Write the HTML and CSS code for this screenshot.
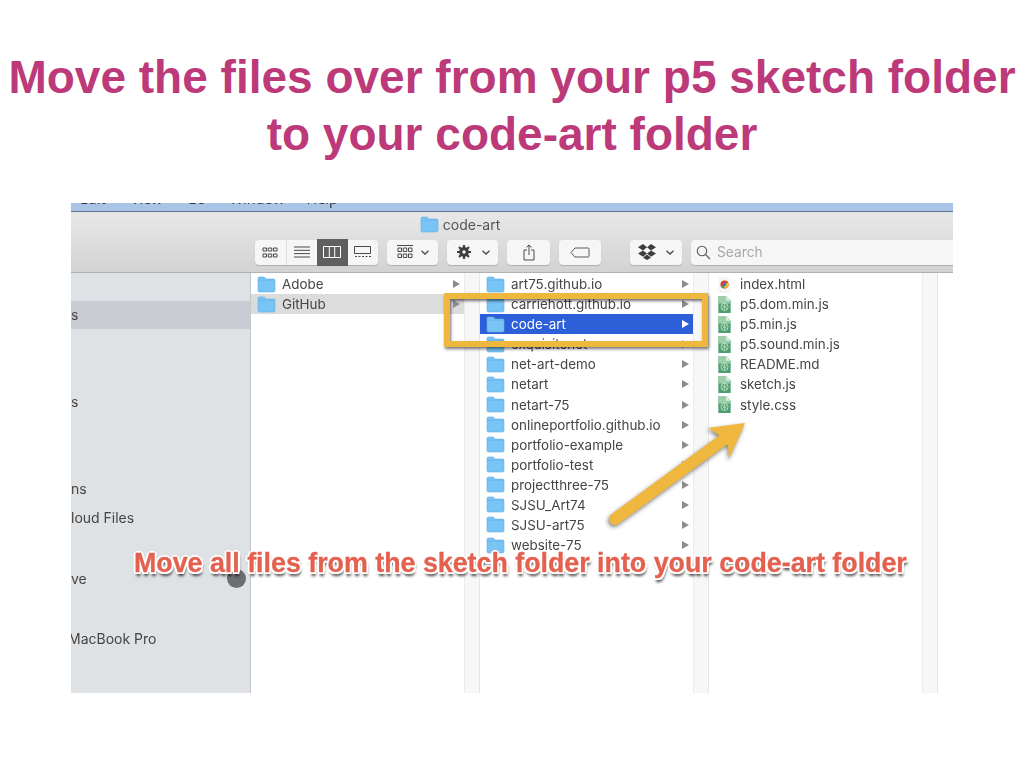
FILE: index.html
```html
<!DOCTYPE html>
<html lang="en">
<head>
<meta charset="utf-8">
<title>Move the files</title>
<link rel="stylesheet" href="styles.css">
</head>
<body>
<svg class="defs" width="0" height="0" aria-hidden="true">
  <defs>
    <symbol id="folder" viewBox="0 0 19 17">
      <path d="M1 2.400C1 1.600 1.600 1 2.400 1h4.400c.6 0 .9.2 1.300.7L9 3h7.600c.8 0 1.400.6 1.400 1.400v10.200c0 .8-.6 1.400-1.400 1.400H2.400C1.600 16 1 15.400 1 14.600z" fill="#7ac4f5" stroke="#62afe4" stroke-width=".6"/>
      <path d="M1 4.200h17" stroke="#5fade6" stroke-width=".6"/>
    </symbol>
    <symbol id="doc" viewBox="0 0 13 18">
      <path d="M0 0h8l5 5v13H0z" fill="#4f9e70"/>
      <path d="M0 0h8l5 5v3H0z" fill="#9ccfa9"/>
      <path d="M8 0l5 5H8z" fill="#d6ecd9"/>
      <circle cx="6.500" cy="11.500" r="3.800" fill="none" stroke="#bfe2ca" stroke-width=".9"/>
      <path d="M3.500 9.500l6 4M9.500 9.500l-6 4M6.500 7.500v8" stroke="#bfe2ca" stroke-width=".7"/>
    </symbol>
    <symbol id="chrome" viewBox="0 0 13 18">
      <path d="M0 0h8.500L13 4.500V18H0z" fill="#f6f6f6"/>
      <circle cx="6.500" cy="9" r="4.300" fill="#d9452f"/>
      <path d="M6.500 9L2.800 11.200A4.300 4.300 0 0 0 6.500 13.300z" fill="#4ba05a"/>
      <path d="M6.500 9v4.300a4.300 4.300 0 0 0 3.800-6.400z" fill="#f2c230"/>
      <circle cx="6.500" cy="9" r="1.800" fill="#3d77cf"/>
    </symbol>
  </defs>
</svg>

<header class="title">
  <h1>Move the files over from your p5 sketch folder<br>to your code-art folder</h1>
</header>

<main class="shot">
  <div class="menubar">
    <span class="menu-edit">Edit</span><span class="menu-view">View</span><span class="menu-go">Go</span><span class="menu-window">Window</span><span class="menu-help">Help</span>
  </div>

  <div class="toolbar">
    <div class="window-title">
      <svg class="ico-folder"><use href="#folder"/></svg><span>code-art</span>
    </div>
    <div class="tools">
      <div class="btn seg">
        <span class="cell"><svg width="16" height="11" viewBox="0 0 16 11"><path d="M1 1h3.500v3H1zM6.250 1h3.500v3h-3.500zM11.500 1H15v3h-3.500zM1 7h3.500v3H1zM6.250 7h3.500v3h-3.500zM11.500 7H15v3h-3.500z" fill="none" stroke="#4a4a4a"/></svg></span>
        <span class="cell plain"><svg width="16" height="12" viewBox="0 0 16 12"><path d="M0 1h16M0 4.300h16M0 7.600h16M0 11h16" stroke="#4a4a4a"/></svg></span>
        <span class="cell on"><svg width="18" height="12" viewBox="0 0 18 12"><path d="M.5.5h17v11H.5zM6.300.5v11M11.700.5v11" fill="none" stroke="#fff"/></svg></span>
        <span class="cell"><svg width="17" height="12" viewBox="0 0 17 12"><path d="M.5.5h16v7H.5z" fill="none" stroke="#4a4a4a"/><path d="M1 10.500h2M4.500 10.500h2M8 10.500h2M11.500 10.500h2M15 10.500h2" stroke="#4a4a4a"/></svg></span>
      </div>
      <div class="btn arrange">
        <svg width="16" height="14" viewBox="0 0 16 14"><path d="M0 .5h16M1 3h3.500v3.500H1zM6.250 3h3.500v3.500h-3.500zM11.500 3H15v3.500h-3.500zM1 9h3.500v3.500H1zM6.250 9h3.500v3.500h-3.500zM11.500 9H15v3.500h-3.500z" fill="none" stroke="#4a4a4a"/></svg>
        <svg class="chev" width="8" height="5" viewBox="0 0 8 5"><path d="M.5.8L4 4 7.500.8" fill="none" stroke="#4a4a4a" stroke-width="1.300"/></svg>
      </div>
      <div class="btn action">
        <svg width="16" height="16" viewBox="0 0 16 16"><circle cx="8" cy="8" r="3.600" fill="none" stroke="#3e3e3e" stroke-width="2.600"/><path d="M8 1v14M1 8h14M3 3l10 10M13 3L3 13" stroke="#3e3e3e" stroke-width="2.200"/><circle cx="8" cy="8" r="1.700" fill="#f6f6f6"/></svg>
        <svg class="chev" width="8" height="5" viewBox="0 0 8 5"><path d="M.5.8L4 4 7.500.8" fill="none" stroke="#4a4a4a" stroke-width="1.300"/></svg>
      </div>
      <div class="btn share">
        <svg width="12" height="17" viewBox="0 0 12 17"><path d="M4 6H1v10h10V6H8M6 11V1M3.500 3.300L6 1l2.500 2.300" fill="none" stroke="#4a4a4a"/></svg>
      </div>
      <div class="btn tag">
        <svg width="20" height="11" viewBox="0 0 20 11"><path d="M5 1h13a1 1 0 0 1 1 1v7a1 1 0 0 1-1 1H5L1 5.500z" fill="none" stroke="#5a5a5a"/></svg>
      </div>
      <div class="btn dropbox">
        <svg width="18" height="16" viewBox="0 0 18 16"><path d="M5 0L0 3.200l5 3.200 4-3.200zM13 0L9 3.200l4 3.200 5-3.200zM0 9.600l5 3.200 4-3.200-4-3.200zM13 6.400L9 9.600l4 3.200 5-3.200zM5 13.800L9 16l4-2.200-4-3.200z" fill="#3e3e3e"/></svg>
        <svg class="chev" width="8" height="5" viewBox="0 0 8 5"><path d="M.5.8L4 4 7.500.8" fill="none" stroke="#4a4a4a" stroke-width="1.300"/></svg>
      </div>
      <div class="btn search">
        <svg width="15" height="15" viewBox="0 0 15 15"><circle cx="6" cy="6" r="4.700" fill="none" stroke="#5a5a5a" stroke-width="1.100"/><path d="M9.500 9.500L14 14" stroke="#5a5a5a" stroke-width="1.100"/></svg>
        <span>Search</span>
      </div>
    </div>
  </div>

  <div class="browser">
    <aside class="sidebar">
      <div class="side-item selected">s</div>
      <div class="side-item gap-docs">s</div>
      <div class="side-item gap-docs">ns</div>
      <div class="side-item gap-none">loud Files</div>
      <div class="side-item gap-sec">ve<span class="eject"></span></div>
      <div class="side-item gap-mac"><span class="clip-m">MacBook Pro</span></div>
    </aside>

    <section class="column">
      <div class="row"><svg class="ico-folder"><use href="#folder"/></svg><span>Adobe</span><i class="tri"></i></div>
      <div class="row parent"><svg class="ico-folder"><use href="#folder"/></svg><span>GitHub</span><i class="tri"></i></div>
    </section>
    <div class="track"></div>

    <section class="column">
      <div class="row"><svg class="ico-folder"><use href="#folder"/></svg><span>art75.github.io</span><i class="tri"></i></div>
      <div class="row"><svg class="ico-folder"><use href="#folder"/></svg><span>carriehott.github.io</span><i class="tri"></i></div>
      <div class="row current"><svg class="ico-folder"><use href="#folder"/></svg><span>code-art</span><i class="tri"></i></div>
      <div class="row"><svg class="ico-folder"><use href="#folder"/></svg><span>exquisitenet</span><i class="tri"></i></div>
      <div class="row"><svg class="ico-folder"><use href="#folder"/></svg><span>net-art-demo</span><i class="tri"></i></div>
      <div class="row"><svg class="ico-folder"><use href="#folder"/></svg><span>netart</span><i class="tri"></i></div>
      <div class="row"><svg class="ico-folder"><use href="#folder"/></svg><span>netart-75</span><i class="tri"></i></div>
      <div class="row"><svg class="ico-folder"><use href="#folder"/></svg><span>onlineportfolio.github.io</span><i class="tri"></i></div>
      <div class="row"><svg class="ico-folder"><use href="#folder"/></svg><span>portfolio-example</span><i class="tri"></i></div>
      <div class="row"><svg class="ico-folder"><use href="#folder"/></svg><span>portfolio-test</span><i class="tri"></i></div>
      <div class="row"><svg class="ico-folder"><use href="#folder"/></svg><span>projectthree-75</span><i class="tri"></i></div>
      <div class="row"><svg class="ico-folder"><use href="#folder"/></svg><span>SJSU_Art74</span><i class="tri"></i></div>
      <div class="row"><svg class="ico-folder"><use href="#folder"/></svg><span>SJSU-art75</span><i class="tri"></i></div>
      <div class="row"><svg class="ico-folder"><use href="#folder"/></svg><span>website-75</span><i class="tri"></i></div>
    </section>
    <div class="track"></div>

    <section class="column files">
      <div class="row"><svg class="ico-doc"><use href="#chrome"/></svg><span>index.html</span></div>
      <div class="row"><svg class="ico-doc"><use href="#doc"/></svg><span>p5.dom.min.js</span></div>
      <div class="row"><svg class="ico-doc"><use href="#doc"/></svg><span>p5.min.js</span></div>
      <div class="row"><svg class="ico-doc"><use href="#doc"/></svg><span>p5.sound.min.js</span></div>
      <div class="row"><svg class="ico-doc"><use href="#doc"/></svg><span>README.md</span></div>
      <div class="row"><svg class="ico-doc"><use href="#doc"/></svg><span>sketch.js</span></div>
      <div class="row"><svg class="ico-doc"><use href="#doc"/></svg><span>style.css</span></div>
    </section>
    <div class="track"></div>
  </div>

  <div class="highlight"></div>
  <svg class="arrow" width="150" height="120" viewBox="0 0 150 120">
    <path d="M14 99L122 20" stroke="#f0b73f" stroke-width="12" stroke-linecap="round"/>
    <path d="M144 3L107 8L118 15L127 26L128 39z" fill="#f0b73f"/>
  </svg>
  <p class="callout">Move all files from the sketch folder into your code-art folder</p>
</main>
</body>
</html>
```

FILE: styles.css
```css
* { box-sizing: border-box; }

html, body { margin: 0; padding: 0; }

body {
  width: 1024px;
  height: 768px;
  background: #fff;
  overflow: hidden;
  font-family: "Liberation Sans", Arial, sans-serif;
}

.defs { display: block; height: 0; }

.title { height: 203px; padding-top: 49px; }

.title h1 {
  margin: 0;
  font-size: 46px;
  line-height: 57px;
  font-weight: 700;
  text-align: center;
  white-space: nowrap;
  color: #bc3a79;
}

.shot {
  position: relative;
  width: 882px;
  height: 490px;
  margin-left: 71px;
  overflow: hidden;
  font-family: Inter, "Liberation Sans", sans-serif;
  filter: blur(.35px);
}

.menubar {
  display: flex;
  height: 9px;
  background: #a9c4e4;
  border-bottom: 1px solid #5d7390;
  overflow: hidden;
  font-family: "Open Sans", sans-serif;
  font-size: 14.500px;
  line-height: 14px;
  color: #333;
}

.menubar span { margin-top: -11px; }
.menu-edit { margin-left: 9px; }
.menu-view { margin-left: 25px; }
.menu-go { margin-left: 24px; }
.menu-window { margin-left: 24px; }
.menu-help { margin-left: 22px; }

.toolbar {
  height: 61px;
  padding-top: 3px;
  background: linear-gradient(#e8e8e8, #d3d3d3);
  border-bottom: 1px solid #b2b2b2;
}

.window-title {
  display: flex;
  align-items: center;
  justify-content: center;
  height: 18px;
  padding-right: 104px;
  gap: 4px;
  font-size: 14px;
  color: #555;
}

.tools {
  display: flex;
  align-items: center;
  height: 26px;
  margin-top: 6px;
  padding-left: 184px;
}

.btn {
  display: flex;
  align-items: center;
  justify-content: center;
  height: 25px;
  background: #f6f6f6;
  border-radius: 4px;
  box-shadow: 0 1px 1px rgba(0, 0, 0, .18);
}

.seg { width: 123px; }

.cell {
  display: flex;
  align-items: center;
  justify-content: center;
  flex: 1;
  height: 100%;
}

.cell:first-child { border-right: 1px solid #dedede; }
.cell.on { height: 27px; background: #5f5f5f; }

.arrange { width: 51px; margin-left: 9px; gap: 8px; }
.action { width: 51px; margin-left: 9px; gap: 10px; }
.share { width: 43px; margin-left: 9px; }
.tag { width: 42px; margin-left: 9px; }
.dropbox { width: 52px; margin-left: 29px; gap: 10px; }

.search {
  flex: 1;
  justify-content: flex-start;
  gap: 6px;
  margin-left: 9px;
  padding-left: 5px;
  border-radius: 4px 0 0 4px;
  font-size: 13.800px;
  color: #a9a9a9;
}

.browser {
  display: flex;
  height: 420px;
  background: #fff;
  font-size: 13.400px;
  color: #454545;
}

.sidebar {
  flex: 0 0 180px;
  padding-top: 28px;
  background: #dfe2e5;
  border-right: 1px solid #c4c6c9;
  font-size: 14px;
}

.side-item {
  position: relative;
  height: 28px;
  line-height: 28px;
  white-space: nowrap;
}

.side-item.selected { background: #c9ccd2; }
.gap-docs { margin-top: 59px; }
.gap-none { margin-top: 1px; }
.gap-sec { margin-top: 33px; }
.gap-mac { margin-top: 32px; }

.clip-m { display: block; margin-left: -3px; }

.eject {
  position: absolute;
  top: 4px;
  right: 4px;
  width: 19px;
  height: 19px;
  border-radius: 50%;
  background: #6c6e71;
}

.column { flex: 0 0 213px; padding-top: 1px; }

.track {
  flex: 0 0 16px;
  background: #f7f7f7;
  border-left: 1px solid #ececec;
  border-right: 1px solid #e6e6e6;
}

.row {
  display: flex;
  align-items: center;
  height: 20.080px;
  padding-left: 6px;
  white-space: nowrap;
}

.row span { margin-left: 6px; flex: 1; }

.ico-folder { flex: none; width: 19px; height: 17px; }
.ico-doc { flex: none; width: 13px; height: 17px; margin-left: 3px; margin-right: 3px; }

.tri {
  flex: none;
  width: 0;
  height: 0;
  margin-right: 4px;
  border-left: 7px solid #8c8c8c;
  border-top: 4px solid transparent;
  border-bottom: 4px solid transparent;
}

.parent { background: #dcdcdc; }
.current { background: #2d5fd8; color: #fff; }
.current .tri { border-left-color: #fff; }

.highlight {
  position: absolute;
  left: 373px;
  top: 90px;
  width: 264px;
  height: 54px;
  border: 6px solid #f0b73f;
  box-shadow: 1px 2px 3px rgba(0, 0, 0, .55), inset 1px 2px 3px rgba(0, 0, 0, .55);
}

.arrow {
  position: absolute;
  left: 530px;
  top: 217px;
  overflow: visible;
  filter: drop-shadow(-1px 2px 2px rgba(0, 0, 0, .5));
}

.callout {
  position: absolute;
  left: 63px;
  top: 345px;
  margin: 0;
  font-family: "Liberation Sans", Arial, sans-serif;
  font-size: 26.800px;
  line-height: 30px;
  font-weight: 700;
  white-space: nowrap;
  color: #e4604f;
  -webkit-text-stroke: .3px #e4604f;
  text-shadow: 2px 0 0 #fff, -2px 0 0 #fff, 0 2px 0 #fff, 0 -2px 0 #fff, 1.500px 1.500px 0 #fff, -1.500px -1.500px 0 #fff, 1.500px -1.500px 0 #fff, -1.500px 1.500px 0 #fff, 1px 4px 3px rgba(0, 0, 0, .8);
}
```
